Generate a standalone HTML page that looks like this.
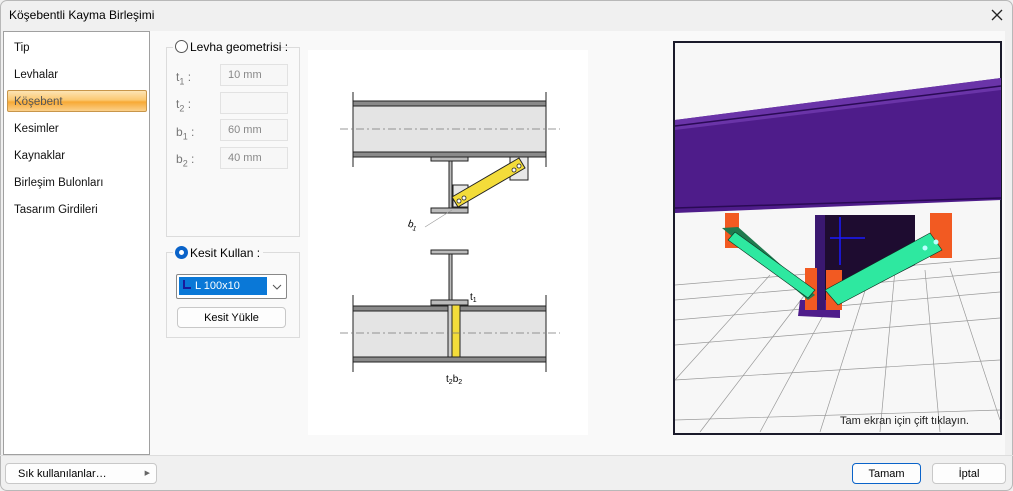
<!DOCTYPE html>
<html><head><meta charset="utf-8"><style>
*{margin:0;padding:0;box-sizing:border-box}
body{width:1013px;height:491px;overflow:hidden;background:#f0f0f0;font-family:"Liberation Sans",sans-serif;font-size:12px;color:#000;position:relative}
.abs{position:absolute}
.win{left:0;top:0;width:1013px;height:491px;border:1px solid #b8b8b8;border-radius:7px;background:#f0f0f0;overflow:hidden}
.title{left:9px;top:8px;font-size:12px}
.list{left:3px;top:31px;width:147px;height:424px;background:#fff;border:1px solid #a0a0a0}
.item{position:absolute;left:10px;font-size:11.5px;color:#111}
.sel{left:3px;top:58px;width:140px;height:22px;border:1px solid #c8964a;border-radius:2px;background:linear-gradient(#fde4b4,#fbc871 45%,#f7a935 55%,#fbd08a);}
.content{left:150px;top:31px;width:855px;height:424px;background:#f9f9f9}
.grp{border:1px solid #dcdcdc}
.lbl{color:#777;font-size:12px}
.inp{position:absolute;left:220px;width:68px;height:22px;border:1px solid #e2e2e2;background:#f7f7f7;color:#888;font-size:11px;padding:4px 0 0 7px}
.btn{border:1px solid #c8c8c8;border-radius:4px;background:#fdfdfd;font-size:11px;text-align:center}
</style></head><body>
<div class="abs win"></div>
<div class="abs title">Köşebentli Kayma Birleşimi</div>
<svg class="abs" style="left:990px;top:8px" width="14" height="14"><path d="M2 2L12 12M12 2L2 12" stroke="#222" stroke-width="1.3"/></svg>
<div class="abs content"></div>
<div class="abs list">
 <div class="item" style="top:10px">Tip</div>
 <div class="item" style="top:37px">Levhalar</div>
 <div class="abs sel"></div>
 <div class="item" style="top:64px;color:#555">Köşebent</div>
 <div class="item" style="top:91px">Kesimler</div>
 <div class="item" style="top:118px">Kaynaklar</div>
 <div class="item" style="top:145px">Birleşim Bulonları</div>
 <div class="item" style="top:172px">Tasarım Girdileri</div>
</div>
<!-- group 1 -->
<div class="abs grp" style="left:166px;top:47px;width:134px;height:190px"></div>
<div class="abs" style="left:173px;top:40px;width:106px;height:14px;background:#f9f9f9"></div>
<div class="abs" style="left:175px;top:40px;width:13px;height:13px;border:1px solid #555;border-radius:50%;background:#fff"></div>
<div class="abs" style="left:190px;top:40px;font-size:12px">Levha geometrisi :</div>
<div class="abs lbl" style="left:176px;top:70px">t<sub style="font-size:9px">1</sub> :</div>
<div class="abs lbl" style="left:176px;top:97px">t<sub style="font-size:9px">2</sub> :</div>
<div class="abs lbl" style="left:176px;top:125px">b<sub style="font-size:9px">1</sub> :</div>
<div class="abs lbl" style="left:176px;top:152px">b<sub style="font-size:9px">2</sub> :</div>
<div class="inp" style="top:64px">10 mm</div>
<div class="inp" style="top:92px"></div>
<div class="inp" style="top:119px">60 mm</div>
<div class="inp" style="top:147px">40 mm</div>
<!-- group 2 -->
<div class="abs grp" style="left:166px;top:252px;width:134px;height:86px"></div>
<div class="abs" style="left:173px;top:245px;width:90px;height:14px;background:#f9f9f9"></div>
<div class="abs" style="left:175px;top:246px;width:13px;height:13px;border:4px solid #0a63c9;border-radius:50%;background:#fff"></div>
<div class="abs" style="left:190px;top:246px;font-size:12px">Kesit Kullan :</div>
<div class="abs" style="left:176px;top:274px;width:111px;height:25px;border:1px solid #888;border-radius:2px;background:#fff"></div>
<div class="abs" style="left:179px;top:277px;width:88px;height:18px;background:#0a78d7;color:#fff;font-size:11px;padding:3px 0 0 4px"><span style="display:inline-block;width:8px;height:9px;border-left:2px solid #1a1a9a;border-bottom:2px solid #1a1a9a;margin-right:4px"></span>L 100x10</div>
<svg class="abs" style="left:272px;top:283px" width="10" height="8"><path d="M1 2L5 6L9 2" stroke="#555" fill="none"/></svg>
<div class="abs btn" style="left:177px;top:307px;width:109px;height:21px;padding-top:4px">Kesit Yükle</div>
<!-- drawing -->
<svg class="abs" style="left:308px;top:50px" width="280" height="385" viewBox="308 50 280 385">
<rect x="308" y="50" width="280" height="385" fill="#fff"/>
<g stroke="#222" stroke-width="1">
<rect x="353" y="101" width="193" height="56" fill="#e4e4e4"/>
<rect x="353" y="101" width="193" height="5" fill="#8a8a8a"/>
<rect x="353" y="152" width="193" height="5" fill="#8a8a8a"/>
<line x1="353" y1="92" x2="353" y2="167"/><line x1="546" y1="92" x2="546" y2="167"/>
<rect x="431" y="157" width="37" height="4" fill="#bbb"/>
<rect x="449" y="161" width="3" height="47" fill="#bbb"/>
<rect x="431" y="208" width="37" height="5" fill="#bbb"/>
<rect x="510" y="157" width="18" height="23" fill="#e8e8e8"/>
<rect x="453" y="185" width="15" height="22" fill="#e8e8e8"/>
<polygon points="452,197 519,158 525,168 458,207" fill="#f3dc3a"/>
</g>
<g fill="#fff" stroke="#222" stroke-width="0.8"><circle cx="459" cy="201" r="2"/><circle cx="464" cy="198" r="2"/><circle cx="514" cy="170" r="2"/><circle cx="519" cy="166" r="2"/></g>
<line x1="340" y1="129" x2="560" y2="129" stroke="#777" stroke-dasharray="8,3,2,3" stroke-width="0.8"/>
<line x1="425" y1="227" x2="452" y2="210" stroke="#999" stroke-width="0.6"/>
<text x="408" y="228" font-size="10" font-family="Liberation Sans" transform="rotate(20 413 225)">b<tspan font-size="7" dy="2">1</tspan></text>
<g stroke="#222" stroke-width="1">
<rect x="353" y="306" width="193" height="56" fill="#e4e4e4"/>
<rect x="353" y="306" width="193" height="5" fill="#8a8a8a"/>
<rect x="353" y="357" width="193" height="5" fill="#8a8a8a"/>
<line x1="353" y1="295" x2="353" y2="372"/><line x1="546" y1="295" x2="546" y2="372"/>
<rect x="431" y="250" width="37" height="4" fill="#bbb"/>
<rect x="449" y="254" width="3" height="46" fill="#bbb"/>
<rect x="431" y="300" width="37" height="5" fill="#bbb"/>
<rect x="448" y="305" width="4" height="52" fill="#ccc"/>
<rect x="452" y="305" width="8" height="52" fill="#f3dc3a"/>
</g>
<line x1="340" y1="333" x2="560" y2="333" stroke="#777" stroke-dasharray="8,3,2,3" stroke-width="0.8"/>
<text x="470" y="300" font-size="10" font-family="Liberation Sans">t<tspan font-size="7" dy="2">1</tspan></text>
<text x="446" y="382" font-size="10" font-family="Liberation Sans">t<tspan font-size="7" dy="2">2</tspan><tspan dy="-2">b</tspan><tspan font-size="7" dy="2">2</tspan></text>
</svg>
<!-- 3D view -->
<svg class="abs" style="left:673px;top:41px" width="329" height="394" viewBox="673 41 329 394">
<rect x="674" y="42" width="327" height="392" fill="#f7f7f7" stroke="#1a1a2a" stroke-width="2"/>
<g stroke="#999" stroke-width="0.7" fill="none">
<path d="M675 285 L1000 258 M675 300 L1000 272 M675 320 L1000 292 M675 345 L1000 318 M675 380 L1000 360 M675 420 L1000 410"/>
<path d="M700 432 L820 275 M760 432 L845 275 M820 432 L870 275 M880 432 L895 270 M940 432 L925 270 M1000 420 L950 268 M675 380 L770 275"/>
</g>
<polygon points="675,120 1001,78 1001,200 675,213" fill="#4e1c8a"/>
<polygon points="675,120 1001,78 1001,90 675,130" fill="#6a34a8"/>
<line x1="675" y1="126" x2="1001" y2="86" stroke="#2a0a55" stroke-width="1.5"/>
<line x1="675" y1="208" x2="1001" y2="198" stroke="#2a0a55" stroke-width="1.5"/>
<polygon points="815,215 915,215 915,265 845,300 815,300" fill="#1e0c30"/>
<polygon points="800,300 840,300 840,318 798,316" fill="#4e1c8a"/>
<rect x="815" y="215" width="10" height="95" fill="#3a1870"/>
<rect x="725" y="213" width="14" height="35" fill="#f25a22"/>
<rect x="930" y="213" width="22" height="45" fill="#f25a22"/>
<rect x="805" y="268" width="12" height="42" fill="#f25a22"/>
<rect x="826" y="270" width="16" height="40" fill="#f25a22"/>
<polygon points="722,228 738,227 815,295 808,300" fill="#1f7a4e"/>
<polygon points="728,240 735,232 815,290 808,298" fill="#2ee8a0" stroke="#0c3020" stroke-width="0.6"/>
<polygon points="825,290 930,233 942,250 838,305" fill="#2ee8a0" stroke="#0c3020" stroke-width="0.6"/>
<circle cx="925" cy="248" r="2.5" fill="#bff"/><circle cx="936" cy="242" r="2.5" fill="#bff"/>
<path d="M840 217V265M830 238H865" stroke="#1a1aff" stroke-width="1.5"/>
<text x="840" y="424" font-size="11" font-family="Liberation Sans" fill="#222">Tam ekran için çift tıklayın.</text>
</svg>
<!-- bottom -->
<div class="abs" style="left:0;top:455px;width:1013px;height:1px;background:#ddd"></div>
<div class="abs btn" style="left:5px;top:463px;width:152px;height:21px;padding-top:4px;text-align:left;padding-left:12px">Sık kullanılanlar…<span style="position:absolute;right:6px;top:5px;font-size:7px;color:#666">▶</span></div>
<div class="abs btn" style="left:852px;top:463px;width:69px;height:21px;padding-top:4px;border:1px solid #0a63c9">Tamam</div>
<div class="abs btn" style="left:932px;top:463px;width:74px;height:21px;padding-top:4px">İptal</div>
</body></html>
